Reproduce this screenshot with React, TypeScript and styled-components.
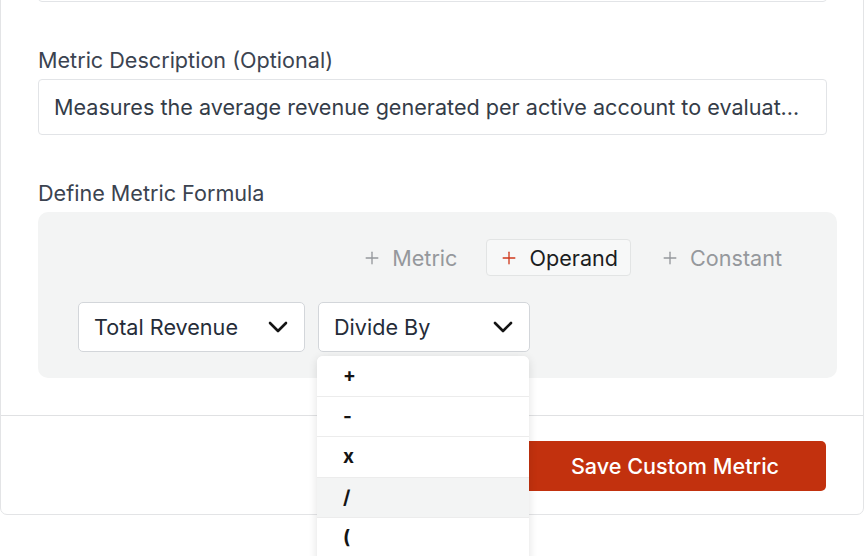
import styled, { createGlobalStyle } from "styled-components";
import { Plus } from "lucide-react";

const GlobalStyle = createGlobalStyle`
  * { box-sizing: border-box; }
  html {
    overflow: hidden;
  }
  body {
    margin: 0;
    padding: 0;
    min-height: 556px;
    background: #ffffff;
    font-family: Inter, "Noto Sans", "Liberation Sans", sans-serif;
  }
`;

const operators = ["+", "-", "x", "/", "(", ")"];

const Chevron = () => (
  <svg width="20" height="12" viewBox="0 0 20 12" fill="none">
    <polyline
      points="2,2 10,10 18,2"
      stroke="currentColor"
      strokeWidth="2.6"
      strokeLinecap="round"
      strokeLinejoin="round"
    />
  </svg>
);

const App = () => {
  return (
    <>
      <GlobalStyle />
      <Card>
        <Body>
          <Field>
            <Label>Metric Name</Label>
            <TextInput readOnly value="Average Revenue Per Account" />
          </Field>
          <Field>
            <Label>Metric Description (Optional)</Label>
            <TextInput
              readOnly
              value="Measures the average revenue generated per active account to evaluate customer value over time."
            />
          </Field>
          <Field>
            <Label>Define Metric Formula</Label>
            <FormulaBox>
              <AddRow>
                <AddButton>
                  <Plus size={20} strokeWidth={1.6} />
                  Metric
                </AddButton>
                <AddButton $active>
                  <Plus size={20} strokeWidth={1.6} />
                  Operand
                </AddButton>
                <AddButton>
                  <Plus size={20} strokeWidth={1.6} />
                  Constant
                </AddButton>
              </AddRow>
              <TermRow>
                <Select $width={227}>
                  Total Revenue
                  <Chevron />
                </Select>
                <SelectWrap>
                  <Select $width={212}>
                    Divide By
                    <Chevron />
                  </Select>
                  <Menu>
                    {operators.map((op) => (
                      <MenuItem key={op} $hover={op === "/"}>
                        {op}
                      </MenuItem>
                    ))}
                  </Menu>
                </SelectWrap>
              </TermRow>
            </FormulaBox>
          </Field>
        </Body>
        <Footer>
          <SaveButton>Save Custom Metric</SaveButton>
        </Footer>
      </Card>
    </>
  );
};

export default App;

const Card = styled.div`
  width: 864px;
  margin-top: -116px;
  background: #ffffff;
  border: 1px solid #e3e4e6;
  border-radius: 7px;
`;

const Body = styled.div`
  display: flex;
  flex-direction: column;
  gap: 46px;
  padding: 30px 37px 37px 37px;
`;

const Field = styled.div`
  display: flex;
  flex-direction: column;
  gap: 7px;
`;

const Label = styled.div`
  font-size: 21.6px;
  line-height: 24px;
  color: #3b4350;
`;

const TextInput = styled.input`
  width: 789px;
  height: 56px;
  padding: 0 16px 0 15px;
  border: 1px solid #e2e4e7;
  border-radius: 4px;
  background: #ffffff;
  font-family: inherit;
  font-size: 21.6px;
  color: #343c48;
  text-overflow: ellipsis;
  outline: none;
`;

const FormulaBox = styled.div`
  width: 799px;
  height: 166px;
  background: #f3f4f4;
  border-radius: 10px;
  padding: 27px 42px 0 40px;
  display: flex;
  flex-direction: column;
  gap: 26px;
`;

const AddRow = styled.div`
  display: flex;
  justify-content: flex-end;
  gap: 16px;
`;

const AddButton = styled.div<{ $active?: boolean }>`
  display: flex;
  align-items: center;
  gap: 10px;
  height: 37px;
  padding: 0 12px;
  border-radius: 4px;
  border: 1px solid ${(p) => (p.$active ? "#e2e4e4" : "transparent")};
  background: ${(p) => (p.$active ? "#f7f8f8" : "transparent")};
  font-size: 21.6px;
  color: ${(p) => (p.$active ? "#1b1d21" : "#95989c")};
  svg {
    color: ${(p) => (p.$active ? "#d0391c" : "#95989c")};
  }
`;

const TermRow = styled.div`
  display: flex;
  gap: 13px;
`;

const SelectWrap = styled.div`
  position: relative;
`;

const Select = styled.div<{ $width: number }>`
  width: ${(p) => p.$width}px;
  height: 50px;
  display: flex;
  align-items: center;
  justify-content: space-between;
  padding: 0 16px 0 15px;
  background: #ffffff;
  border: 1px solid #d3d6da;
  border-radius: 5px;
  font-size: 21.6px;
  color: #252c38;
  svg {
    color: #141414;
  }
`;

const Menu = styled.div`
  position: absolute;
  top: 54px;
  left: -1px;
  width: 212px;
  background: #ffffff;
  border-radius: 6px;
  box-shadow: 0 2px 10px rgba(0, 0, 0, 0.12);
  overflow: hidden;
  z-index: 2;
`;

const MenuItem = styled.div<{ $hover?: boolean }>`
  height: 40.5px;
  display: flex;
  align-items: center;
  padding-left: 26px;
  background: ${(p) => (p.$hover ? "#f3f4f4" : "#ffffff")};
  border-bottom: 1.5px solid #ececec;
  font-size: 19px;
  font-weight: 700;
  color: #141414;
`;

const Footer = styled.div`
  display: flex;
  justify-content: flex-end;
  padding: 25px 37px 23px;
  border-top: 1px solid #e0e1e3;
`;

const SaveButton = styled.button`
  width: 302px;
  height: 50px;
  border: none;
  border-radius: 5px;
  background: #c2310e;
  color: #ffffff;
  font-family: inherit;
  font-size: 21.6px;
  font-weight: 500;
`;
